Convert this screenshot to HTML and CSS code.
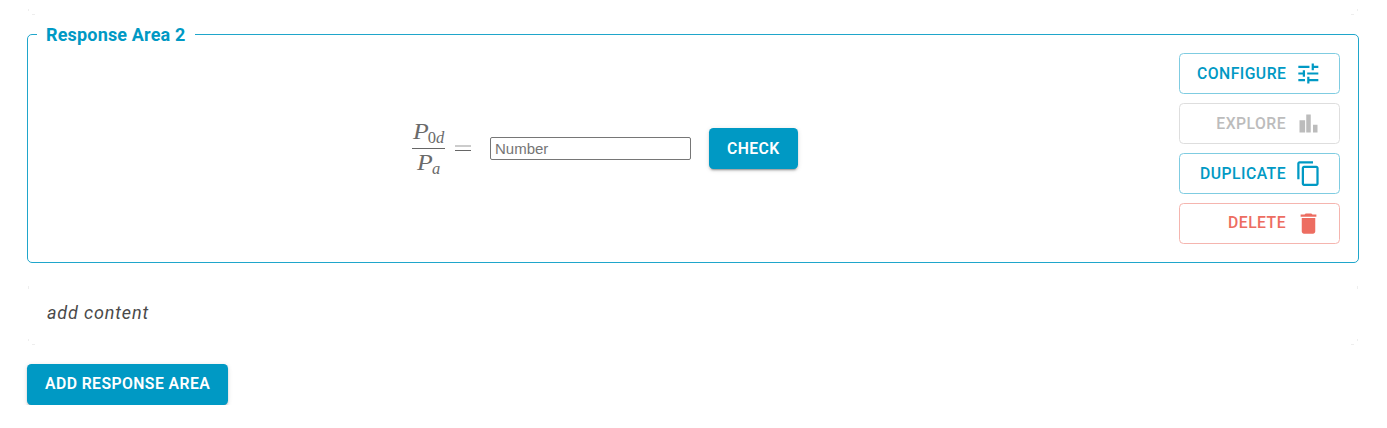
FILE: index.html
```html
<!DOCTYPE html>
<html lang="en">
<head>
<meta charset="utf-8">
<title>Response Area</title>
<link rel="stylesheet" href="styles.css">
</head>
<body>
<main class="page">
  <div class="previous-editor"></div>
  <fieldset class="area">
    <legend class="area-title">Response Area 2</legend>
    <div class="area-body">
      <div class="response">
        <span class="formula">
          <span class="fraction">
            <span class="numerator"><i class="var">P</i><span class="sub"><span class="digit">0</span><i>d</i></span></span>
            <span class="denominator"><i class="var">P</i><span class="sub"><i>a</i></span></span>
          </span>
          <svg class="equals" width="17" height="8" viewBox="0 0 17 8"><path fill="#ccc" d="M1 0h16v2H1z"/><path fill="#666" d="M1 5h16v1H1z"/></svg>
        </span>
        <input class="number" type="text" placeholder="Number" aria-label="Number">
        <button class="btn btn-solid">CHECK</button>
      </div>
      <div class="actions">
        <button class="btn btn-outline">CONFIGURE
          <svg class="icon" viewBox="0 0 24 24"><path d="M3 17v2h6v-2H3zM3 5v2h10V5H3zm10 16v-2h8v-2h-8v-2h-2v6h2zM7 9v2H3v2h4v2h2V9H7zm14 4v-2H11v2h10zm-6-4h2V7h4V5h-4V3h-2v6z"/></svg>
        </button>
        <button class="btn btn-outline btn-disabled" disabled>EXPLORE
          <svg class="icon" viewBox="0 0 24 24"><path d="M4 9h5v11H4zM16 13h4v7h-4zM10 4h4v16h-4z"/></svg>
        </button>
        <button class="btn btn-outline">DUPLICATE
          <svg class="icon" viewBox="0 0 24 24"><path d="M16 1H4c-1.1 0-2 .9-2 2v14h2V3h12V1zm3 4H8c-1.1 0-2 .9-2 2v14c0 1.100.9 2 2 2h11c1.100 0 2-.9 2-2V7c0-1.100-.9-2-2-2zm0 16H8V7h11v14z"/></svg>
        </button>
        <button class="btn btn-outline btn-danger"><span class="label">DELETE</span>
          <svg class="icon" viewBox="0 0 24 24"><path d="M6 19c0 1.100.9 2 2 2h8c1.100 0 2-.9 2-2V7H6v12zM19 4h-3.500l-1-1h-5l-1 1H5v2h14V4z"/></svg>
        </button>
      </div>
    </div>
  </fieldset>
  <div class="content-editor">add content</div>
  <button class="btn btn-solid"><span class="label">ADD RESPONSE AREA</span></button>
</main>
</body>
</html>
```
FILE: styles.css
```css
* { box-sizing: border-box; }

body {
  margin: 0;
  background: #fff;
  font-family: Roboto, "Liberation Sans", sans-serif;
}

.page {
  --mark: linear-gradient(#eee, #eee);
  padding: 0 28px 0 27px;
}

/* Faint corner marks of the editors above and below the response area */
.previous-editor {
  height: 15px;
  margin-bottom: 9px;
  background:
    var(--mark) 1px 9px / 1px 2px,
    var(--mark) 5px 14px / 3px 1px,
    var(--mark) right 1px top 9px / 1px 2px,
    var(--mark) right 5px top 14px / 3px 1px;
  background-repeat: no-repeat;
}

.area {
  margin: 0;
  padding: 0 18px 18px 9px;
  height: 239px;
  min-width: 0;
  border: 1px solid #1fa6cb;
  border-radius: 5px;
}

.area-title {
  padding: 0 9px;
  height: 21px;
  color: #0099c4;
  font-size: 18px;
  font-weight: 700;
  line-height: 21px;
  letter-spacing: 0.17px;
}

.area-body {
  display: flex;
  justify-content: space-between;
  padding-top: 8px;
}

.response {
  display: flex;
  flex: 1;
  align-items: center;
  padding-left: 375px;
  height: 191px;
}

.formula {
  display: flex;
  align-items: center;
  width: 78px;
  color: #6a6a6a;
  font-family: "Liberation Serif", serif;
  font-size: 23px;
}

.fraction {
  display: flex;
  flex-direction: column;
  width: 33px;
}

.numerator,
.denominator {
  display: flex;
  justify-content: center;
  align-items: baseline;
  height: 29px;
  line-height: 29px;
}

.var {
  display: inline-block;
  padding-right: 1px;
  transform: scaleX(1.12);
  transform-origin: left;
}

.numerator {
  height: 30px;
  line-height: 25px;
  border-bottom: 1px solid #666;
}

.denominator { line-height: 27px; }

.sub {
  position: relative;
  top: 4px;
  font-size: 16.500px;
}

.equals { margin-left: 9px; }

.number {
  width: 201px;
  height: 23px;
  padding: 1px 4px;
  border: 1px solid #767676;
  border-radius: 2px;
  font: 15px "Liberation Sans", sans-serif;
  background: #fff;
}

.number::placeholder { color: #757575; }

.response .btn { margin-left: 18px; }

.actions {
  display: flex;
  flex-direction: column;
  gap: 9px;
  width: 161px;
}

.btn {
  display: flex;
  align-items: center;
  height: 41px;
  padding: 0 18px;
  border: 0;
  border-radius: 4.500px;
  font: 500 15.750px Roboto, "Liberation Sans", sans-serif;
  letter-spacing: 0.45px;
  white-space: nowrap;
}

.label { padding-bottom: 2px; }

.btn-solid {
  background: #0099c4;
  color: #fff;
  font-weight: 600;
  letter-spacing: 0.43px;
  box-shadow: 0 3px 1px -2px rgba(0,0,0,.2), 0 2px 2px rgba(0,0,0,.14), 0 1px 5px rgba(0,0,0,.12);
}

.btn-outline {
  justify-content: flex-end;
  padding: 0 17px;
  border: 1px solid #7fcce1;
  background: transparent;
  color: #0099c4;
}

.btn-disabled {
  border-color: #dedede;
  color: #bcbcbc;
}

.btn-danger {
  border-color: #f5b5af;
  color: #ed6d61;
}

.icon {
  width: 27px;
  height: 27px;
  margin-left: 9px;
  fill: currentColor;
}

.content-editor {
  margin: 23px 0 18px;
  padding: 0 20px;
  height: 60px;
  background:
    var(--mark) 1px 0 / 1px 3px,
    var(--mark) 1px 53px / 1px 2px,
    var(--mark) 5px 58px / 3px 1px,
    var(--mark) right 1px top 0 / 1px 3px,
    var(--mark) right 1px top 53px / 1px 2px,
    var(--mark) right 5px top 58px / 3px 1px;
  background-repeat: no-repeat;
  color: #4a4a4a;
  font-size: 18px;
  font-style: italic;
  line-height: 54px;
  letter-spacing: 0.85px;
}
```
